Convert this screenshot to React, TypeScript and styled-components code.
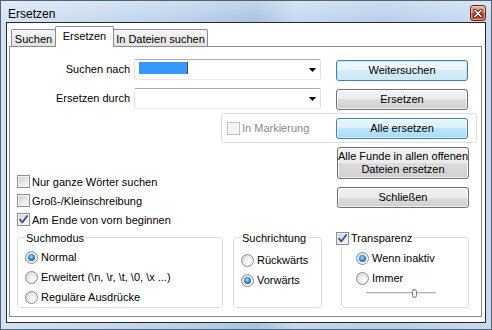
import React from "react";
import styled, { createGlobalStyle, css } from "styled-components";

const GlobalStyle = createGlobalStyle`
  *, *::before, *::after { box-sizing: border-box; }
  html, body { margin: 0; padding: 0; background: #fff; }
  body {
    font-family: "Liberation Sans", Arial, sans-serif;
    font-size: 11px;
    color: #000;
  }
`;

const Window = styled.div`
  width: 492px;
  height: 330px;
  display: flex;
  flex-direction: column;
  padding: 0 5px 6px 5px;
  border: 1px solid #4f6379;
  background:
    linear-gradient(180deg, rgba(255, 255, 255, 0.3) 0px, rgba(255, 255, 255, 0) 22px),
    linear-gradient(90deg, #d3e3f4 0%, #c6d9ee 20%, #b9d0e9 38%, #a8c2e0 52%, #c4d8ee 60%, #b7cee8 78%, #c8dbf0 100%);
`;

const TitleBar = styled.div`
  flex: none;
  height: 21px;
  display: flex;
  align-items: flex-start;
  justify-content: space-between;
`;

const TitleText = styled.div`
  padding: 6px 0 0 2px;
  font-size: 12px;
  line-height: 15px;
`;

const CloseButton = styled.div`
  width: 16px;
  height: 16px;
  margin-top: 4px;
  border: 1px solid #6b2418;
  border-radius: 3px;
  display: flex;
  align-items: center;
  justify-content: center;
  background: linear-gradient(180deg, #eab0a2 0%, #d88a78 45%, #c1462d 52%, #d2603f 100%);
  box-shadow: inset 0 0 0 1px rgba(255, 255, 255, 0.35);
`;

const Client = styled.div`
  flex: 1;
  display: flex;
  flex-direction: column;
  border: 1px solid #262a30;
  background: #fff;
  padding: 3px 3px 5px 2px;
`;

const TabStrip = styled.div`
  flex: none;
  height: 21px;
  margin-bottom: -1px;
  padding-left: 2px;
  display: flex;
  align-items: flex-end;
  position: relative;
  z-index: 1;
`;

const Tab = styled.div<{ $active?: boolean; $w: number }>`
  width: ${(p) => p.$w}px;
  display: flex;
  align-items: center;
  justify-content: center;
  white-space: nowrap;
  border: 1px solid #898c95;
  border-bottom: none;
  border-radius: 2px 2px 0 0;
  & + & {
    margin-left: -1px;
  }
  ${(p) =>
    p.$active
      ? css`
          height: 21px;
          padding-bottom: 2px;
          background: #fff;
          position: relative;
          z-index: 1;
        `
      : css`
          height: 17px;
          margin-bottom: 1px;
          padding-top: 1px;
          background: linear-gradient(180deg, #f6f6f6 0%, #ececec 50%, #e2e2e2 100%);
        `}
`;

const Panel = styled.div`
  flex: 1;
  display: flex;
  flex-direction: column;
  border: 1px solid #898c95;
  background: #fff;
  padding-top: 12px;
`;

const Button = styled.button<{ $variant?: "default" | "hot"; $h?: number }>`
  flex: none;
  width: 132px;
  height: ${(p) => p.$h ?? 21}px;
  padding: 0;
  margin: 0;
  font: inherit;
  color: #000;
  line-height: 13px;
  white-space: nowrap;
  text-align: center;
  display: flex;
  align-items: center;
  justify-content: center;
  border: 1px solid #707070;
  border-radius: 3px;
  background: linear-gradient(180deg, #f2f2f2 0%, #ebebeb 50%, #dddddd 50%, #cfcfcf 100%);
  box-shadow: inset 0 0 0 1px rgba(255, 255, 255, 0.75);
  ${(p) =>
    p.$variant === "default" &&
    css`
      border-color: #3c7fb1;
      background: linear-gradient(180deg, #f3f9fd 0%, #e6f3fb 50%, #d6edf9 50%, #cbe7f7 100%);
      box-shadow: inset 0 0 0 1px #c8ecfb;
    `}
  ${(p) =>
    p.$variant === "hot" &&
    css`
      border-color: #3c7fb1;
      background: linear-gradient(180deg, #eaf6fd 0%, #d9f0fc 50%, #bee6fd 50%, #a7d9f5 100%);
      box-shadow: inset 0 0 0 1px rgba(255, 255, 255, 0.6);
    `}
`;

const FieldRow = styled.div<{ $mt?: number }>`
  display: flex;
  align-items: flex-start;
  margin-top: ${(p) => p.$mt ?? 0}px;
  & > ${Button} {
    margin-top: 1px;
  }
`;

const FieldLabel = styled.div`
  width: 120px;
  margin-right: 4px;
  text-align: right;
  line-height: 21px;
  white-space: nowrap;
`;

const Combo = styled.div`
  width: 187px;
  height: 21px;
  margin-right: 15px;
  display: flex;
  align-items: center;
  padding: 0 4px;
  background: #fff;
  border: 1px solid;
  border-color: #abadb3 #dbdfe6 #e3e9ef #e2e3ea;
  border-radius: 2px;
`;

const Selection = styled.span`
  align-self: flex-start;
  margin-top: 2px;
  width: 49px;
  height: 12px;
  background: #3399ff;
  border-right: 1px solid #4a4a4a;
`;

const ArrowSvg = styled.svg`
  margin-left: auto;
  flex: none;
`;

const ComboArrow = () => (
  <ArrowSvg width="7" height="4" viewBox="0 0 7 4">
    <path d="M0 0 H7 L3.5 4 Z" fill="#000" />
  </ArrowSvg>
);

const MarkBox = styled.div`
  margin: 3px 0 0 211px;
  width: 256px;
  height: 30px;
  display: flex;
  align-items: center;
  padding: 0 8px 0 5px;
  border: 1px solid #d5dfe5;
  border-radius: 3px;
  & > ${Button} {
    margin-left: auto;
  }
`;

const Middle = styled.div`
  display: flex;
  align-items: flex-start;
`;

const CheckColumn = styled.div`
  margin-left: 7px;
  padding-top: 29px;
  display: flex;
  flex-direction: column;
`;

const ButtonColumn = styled.div`
  margin: 0 12px 0 auto;
  padding-top: 4px;
  display: flex;
  flex-direction: column;
  gap: 8px;
`;

const CheckRow = styled.div<{ $disabled?: boolean }>`
  height: 19px;
  display: flex;
  align-items: center;
  gap: 2px;
  white-space: nowrap;
  color: ${(p) => (p.$disabled ? "#8a8a8a" : "#000")};
`;

const Box = styled.span<{ $disabled?: boolean }>`
  flex: none;
  width: 13px;
  height: 13px;
  display: flex;
  align-items: center;
  justify-content: center;
  border: 1px solid ${(p) => (p.$disabled ? "#c2c2c2" : "#8e8f8f")};
  background: ${(p) =>
    p.$disabled ? "#f4f4f4" : "linear-gradient(135deg, #c9cdd3 0%, #e8e9eb 55%, #fafafa 100%)"};
  box-shadow: inset 0 0 0 1px ${(p) => (p.$disabled ? "#f7f7f7" : "#f3f3f3")};
`;

const CheckMark = () => (
  <svg width="11" height="11" viewBox="0 0 11 11">
    <path d="M2 5.6 L4.4 8.3 L9.2 2" fill="none" stroke="#2e4f8f" strokeWidth="1.8" strokeLinecap="round" strokeLinejoin="round" />
  </svg>
);

const Check = ({ checked, disabled, label }: { checked?: boolean; disabled?: boolean; label: string }) => (
  <CheckRow $disabled={disabled}>
    <Box $disabled={disabled}>{checked && <CheckMark />}</Box>
    <span>{label}</span>
  </CheckRow>
);

const GroupRow = styled.div`
  margin-top: 8px;
  padding-left: 7px;
  display: flex;
  align-items: flex-start;
`;

const GroupBox = styled.div<{ $w: number; $pl: number; $ml?: number }>`
  width: ${(p) => p.$w}px;
  height: 71px;
  margin-left: ${(p) => p.$ml ?? 0}px;
  padding-left: ${(p) => p.$pl}px;
  display: flex;
  flex-direction: column;
  border: 1px solid #d5dfe5;
  border-radius: 3px;
`;

const GroupTitle = styled.div<{ $ml?: number }>`
  align-self: flex-start;
  margin: -6px 0 0 ${(p) => p.$ml ?? 0}px;
  padding: 0 2px 0 1px;
  height: 13px;
  line-height: 13px;
  background: #fff;
  display: flex;
  align-items: center;
  gap: 2px;
  white-space: nowrap;
`;

const RadioList = styled.div<{ $pt: number }>`
  padding-top: ${(p) => p.$pt}px;
  display: flex;
  flex-direction: column;
`;

const RadioRow = styled.div`
  height: 20px;
  display: flex;
  align-items: center;
  gap: 3px;
  white-space: nowrap;
`;

const RadioCircle = styled.span<{ $on?: boolean }>`
  flex: none;
  width: 13px;
  height: 13px;
  border-radius: 50%;
  border: 1px solid #8e8f8f;
  background: radial-gradient(circle at 65% 65%, #ffffff 0%, #ededed 45%, #c9ccd1 100%);
  display: flex;
  align-items: center;
  justify-content: center;
  &::after {
    content: "";
    display: ${(p) => (p.$on ? "block" : "none")};
    width: 7px;
    height: 7px;
    border-radius: 50%;
    background: radial-gradient(circle at 45% 40%, #a6e0fc 0%, #3d97d6 40%, #114f8d 85%, #0c3a6b 100%);
  }
`;

const Radio = ({ on, label }: { on?: boolean; label: string }) => (
  <RadioRow>
    <RadioCircle $on={on} />
    <span>{label}</span>
  </RadioRow>
);

const SliderSvg = styled.svg`
  margin-left: 10px;
  display: block;
`;

const Slider = () => (
  <SliderSvg width="70" height="11" viewBox="0 0 70 11">
    <rect x="0" y="4" width="70" height="1" fill="#b5b5b5" />
    <rect x="0" y="5" width="70" height="1" fill="#e8e8e8" />
    <rect x="46.5" y="1.5" width="4" height="8" rx="2" fill="#f5f5f5" stroke="#7a7a7a" />
  </SliderSvg>
);

const CloseGlyph = () => (
  <svg width="10" height="9" viewBox="0 0 10 9">
    <path d="M2 1.5 L8 7.5 M8 1.5 L2 7.5" stroke="#4a1810" strokeWidth="3.4" strokeLinecap="round" />
    <path d="M2 1.5 L8 7.5 M8 1.5 L2 7.5" stroke="#ffffff" strokeWidth="1.7" strokeLinecap="round" />
  </svg>
);

export default function App() {
  return (
    <>
      <GlobalStyle />
      <Window>
        <TitleBar>
          <TitleText>Ersetzen</TitleText>
          <CloseButton>
            <CloseGlyph />
          </CloseButton>
        </TitleBar>
        <Client>
          <TabStrip>
            <Tab $w={45}>Suchen</Tab>
            <Tab $w={59} $active>
              Ersetzen
            </Tab>
            <Tab $w={95}>In Dateien suchen</Tab>
          </TabStrip>
          <Panel>
            <FieldRow>
              <FieldLabel>Suchen nach</FieldLabel>
              <Combo>
                <Selection />
                <ComboArrow />
              </Combo>
              <Button $variant="default">Weitersuchen</Button>
            </FieldRow>
            <FieldRow $mt={7}>
              <FieldLabel>Ersetzen durch</FieldLabel>
              <Combo>
                <ComboArrow />
              </Combo>
              <Button>Ersetzen</Button>
            </FieldRow>
            <MarkBox>
              <Check disabled label="In Markierung" />
              <Button $variant="hot">Alle ersetzen</Button>
            </MarkBox>
            <Middle>
              <CheckColumn>
                <Check label="Nur ganze Wörter suchen" />
                <Check label="Groß-/Kleinschreibung" />
                <Check checked label="Am Ende von vorn beginnen" />
              </CheckColumn>
              <ButtonColumn>
                <Button $h={32}>
                  Alle Funde in allen offenen
                  <br />
                  Dateien ersetzen
                </Button>
                <Button>Schließen</Button>
              </ButtonColumn>
            </Middle>
            <GroupRow>
              <GroupBox $w={206} $pl={7}>
                <GroupTitle>Suchmodus</GroupTitle>
                <RadioList $pt={2}>
                  <Radio on label="Normal" />
                  <Radio label={"Erweitert (\\n, \\r, \\t, \\0, \\x ...)"} />
                  <Radio label="Reguläre Ausdrücke" />
                </RadioList>
              </GroupBox>
              <GroupBox $w={89} $pl={7} $ml={10}>
                <GroupTitle>Suchrichtung</GroupTitle>
                <RadioList $pt={5}>
                  <Radio label="Rückwärts" />
                  <Radio on label="Vorwärts" />
                </RadioList>
              </GroupBox>
              <GroupBox $w={128} $pl={14} $ml={19}>
                <GroupTitle $ml={-21}>
                  <Box>
                    <CheckMark />
                  </Box>
                  <span>Transparenz</span>
                </GroupTitle>
                <RadioList $pt={3}>
                  <Radio on label="Wenn inaktiv" />
                  <Radio label="Immer" />
                  <Slider />
                </RadioList>
              </GroupBox>
            </GroupRow>
          </Panel>
        </Client>
      </Window>
    </>
  );
}
